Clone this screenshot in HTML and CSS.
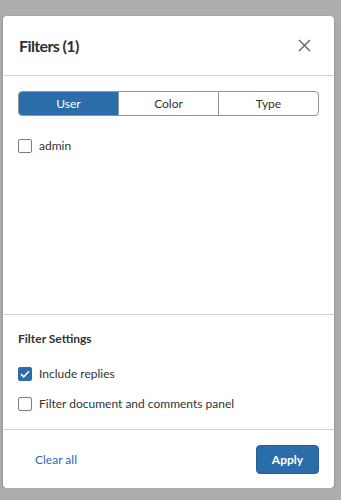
FILE: index.html
```html
<!DOCTYPE html>
<html lang="en">
<head>
  <meta charset="UTF-8" />
  <meta name="viewport" content="width=device-width, initial-scale=1.0"/>
  <title>Filters</title>
  <link rel="stylesheet" href="styles.css">
</head>
<body>
  <div class="modal">
    <div class="modal-header">
      <h2>Filters (1)</h2>
      <button type="button" class="close-btn" aria-label="Close">
        <svg width="13" height="13" viewBox="0 0 13 13"><path d="M1 1L12 12M12 1L1 12" stroke="#5a6470" stroke-width="1.4" fill="none"/></svg>
      </button>
    </div>

    <div class="filter-list">
      <div class="tabs">
        <button type="button" class="tab active">User</button>
        <button type="button" class="tab">Color</button>
        <button type="button" class="tab">Type</button>
      </div>
      <label class="check-row">
        <span class="box"></span>
        <span>admin</span>
      </label>
    </div>

    <div class="settings">
      <h3>Filter Settings</h3>
      <label class="check-row">
        <span class="box checked">
          <svg width="10" height="8" viewBox="0 0 10 8"><path d="M1 4.2L3.7 6.8L9 1.2" stroke="#fff" stroke-width="1.6" fill="none"/></svg>
        </span>
        <span>Include replies</span>
      </label>
      <label class="check-row">
        <span class="box"></span>
        <span>Filter document and comments panel</span>
      </label>
    </div>

    <div class="modal-footer">
      <button type="button" class="link-btn">Clear all</button>
      <button type="button" class="apply-btn">Apply</button>
    </div>
  </div>
</body>
</html>
```

FILE: styles.css
```css
:root {
  --primary: #2b6da8;
  --text-dark: #333333;
  --border-color: #cfd4da;
  --box-border: #7b7f85;
}

* {
  box-sizing: border-box;
  margin: 0;
  padding: 0;
}

body {
  font-family: Lato, 'Noto Sans', sans-serif;
  background-color: #adadad;
  color: var(--text-dark);
}

button {
  font-family: inherit;
  border: none;
  background: none;
  cursor: pointer;
}

.modal {
  width: 331px;
  margin: 16px 0 0 3px;
  background-color: #fff;
  border-radius: 4px;
  box-shadow: 0 1px 3px rgba(0, 0, 0, 0.25);
}

.modal-header {
  height: 60px;
  padding: 0 22px 0 16px;
  display: flex;
  align-items: center;
  justify-content: space-between;
  border-bottom: 1px solid var(--border-color);
}

.modal-header h2 {
  font-size: 16px;
  font-weight: 700;
  letter-spacing: -0.6px;
  color: #2f2f2f;
}

.close-btn {
  width: 16px;
  height: 16px;
  display: flex;
  align-items: center;
  justify-content: center;
}

.filter-list {
  height: 239px;
  padding: 15px 15px 0 15px;
  border-bottom: 1px solid var(--border-color);
}

.tabs {
  display: flex;
  height: 25px;
  border: 1px solid #8f959c;
  border-radius: 4px;
  overflow: hidden;
  margin-bottom: 22px;
}

.tab {
  flex: 1;
  font-size: 12px;
  color: var(--text-dark);
  border-left: 1px solid #8f959c;
}

.tab:first-child {
  border-left: none;
}

.tab.active {
  background-color: var(--primary);
  color: #fff;
}

.check-row {
  display: flex;
  align-items: center;
  gap: 7px;
  font-size: 12px;
  height: 15px;
}

.box {
  width: 14px;
  height: 14px;
  border: 1px solid var(--box-border);
  border-radius: 2px;
  display: flex;
  align-items: center;
  justify-content: center;
  flex-shrink: 0;
}

.box.checked {
  background-color: var(--primary);
  border-color: var(--primary);
}

.settings {
  height: 115px;
  padding: 16px 15px 0 15px;
  border-bottom: 1px solid var(--border-color);
}

.settings h3 {
  font-size: 12px;
  font-weight: 700;
  margin-bottom: 20px;
}

.settings .check-row {
  margin-bottom: 15px;
}

.modal-footer {
  height: 58px;
  padding: 0 15px 0 27px;
  display: flex;
  align-items: center;
  justify-content: space-between;
}

.link-btn {
  font-size: 12px;
  color: var(--primary);
  padding: 4px 5px;
}

.apply-btn {
  width: 63px;
  height: 29px;
  background-color: var(--primary);
  color: #fff;
  font-size: 12px;
  font-weight: 700;
  border: 1px solid #245e93;
  border-radius: 4px;
}
```
